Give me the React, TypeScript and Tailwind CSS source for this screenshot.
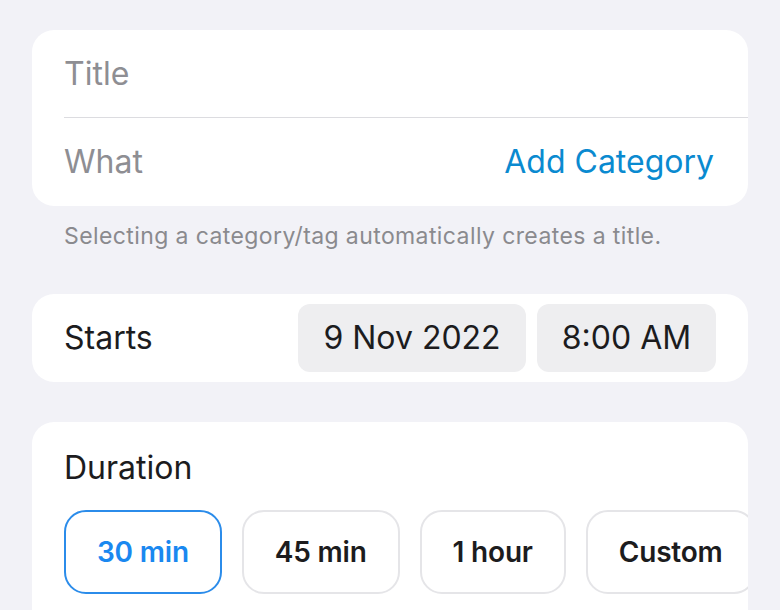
import React, { useState } from "react";

const durations = ["30 min", "45 min", "1 hour", "Custom"];

export default function App() {
    const [selected, setSelected] = useState("30 min");

    return (
        <div className="min-h-screen w-full bg-[#f2f2f7] pt-[30px] pl-8 text-[#1c1c1e] font-['Inter',sans-serif]">
            {/* Title / What card */}
            <div className="w-[716px] bg-white rounded-[22px] overflow-hidden">
                <div className="h-[87px] flex items-center pl-8">
                    <span className="text-[32px] text-[#8e8e93]">Title</span>
                </div>
                <div className="ml-8 h-px bg-[#dcdce0]" />
                <div className="h-[88px] flex items-center justify-between pl-8 pr-[34px]">
                    <span className="text-[32px] text-[#8e8e93]">What</span>
                    <span className="text-[32px] text-[#0a8ad0]">Add Category</span>
                </div>
            </div>

            <p className="mt-[14px] pl-8 text-[23px] leading-[32px] text-[#8a8a8e] tracking-[0.4px]">
                Selecting a category/tag automatically creates a title.
            </p>

            {/* Starts card */}
            <div className="mt-[42px] w-[716px] h-[88px] bg-white rounded-[22px] flex items-center pl-8 pr-8">
                <span className="text-[32px] flex-1">Starts</span>
                <div className="flex gap-[11px]">
                    <div className="w-[228px] h-[68px] rounded-[12px] bg-[#eeeef0] flex items-center justify-center text-[32px]">
                        9 Nov 2022
                    </div>
                    <div className="w-[179px] h-[68px] rounded-[12px] bg-[#eeeef0] flex items-center justify-center text-[32px]">
                        8:00 AM
                    </div>
                </div>
            </div>

            {/* Duration card */}
            <div className="mt-[40px] w-[716px] h-[188px] bg-white rounded-t-[22px] overflow-hidden pl-8 pt-[28px]">
                <div className="text-[32px] leading-[36px]">Duration</div>
                <div className="mt-[24px] flex gap-[20px]">
                    {durations.map((d) => (
                        <button
                            key={d}
                            onClick={() => setSelected(d)}
                            className={
                                d === selected
                                    ? "shrink-0 h-[84px] px-[31px] rounded-[22px] border-2 border-[#2b8cea] text-[#1a88f0] text-[28px] font-semibold tracking-[-0.2px]"
                                    : "shrink-0 h-[84px] px-[31px] rounded-[22px] border-2 border-[#e5e5e8] text-[#1c1c1e] text-[28px] font-semibold tracking-[-0.2px]"
                            }
                        >
                            {d}
                        </button>
                    ))}
                </div>
            </div>
        </div>
    );
}
